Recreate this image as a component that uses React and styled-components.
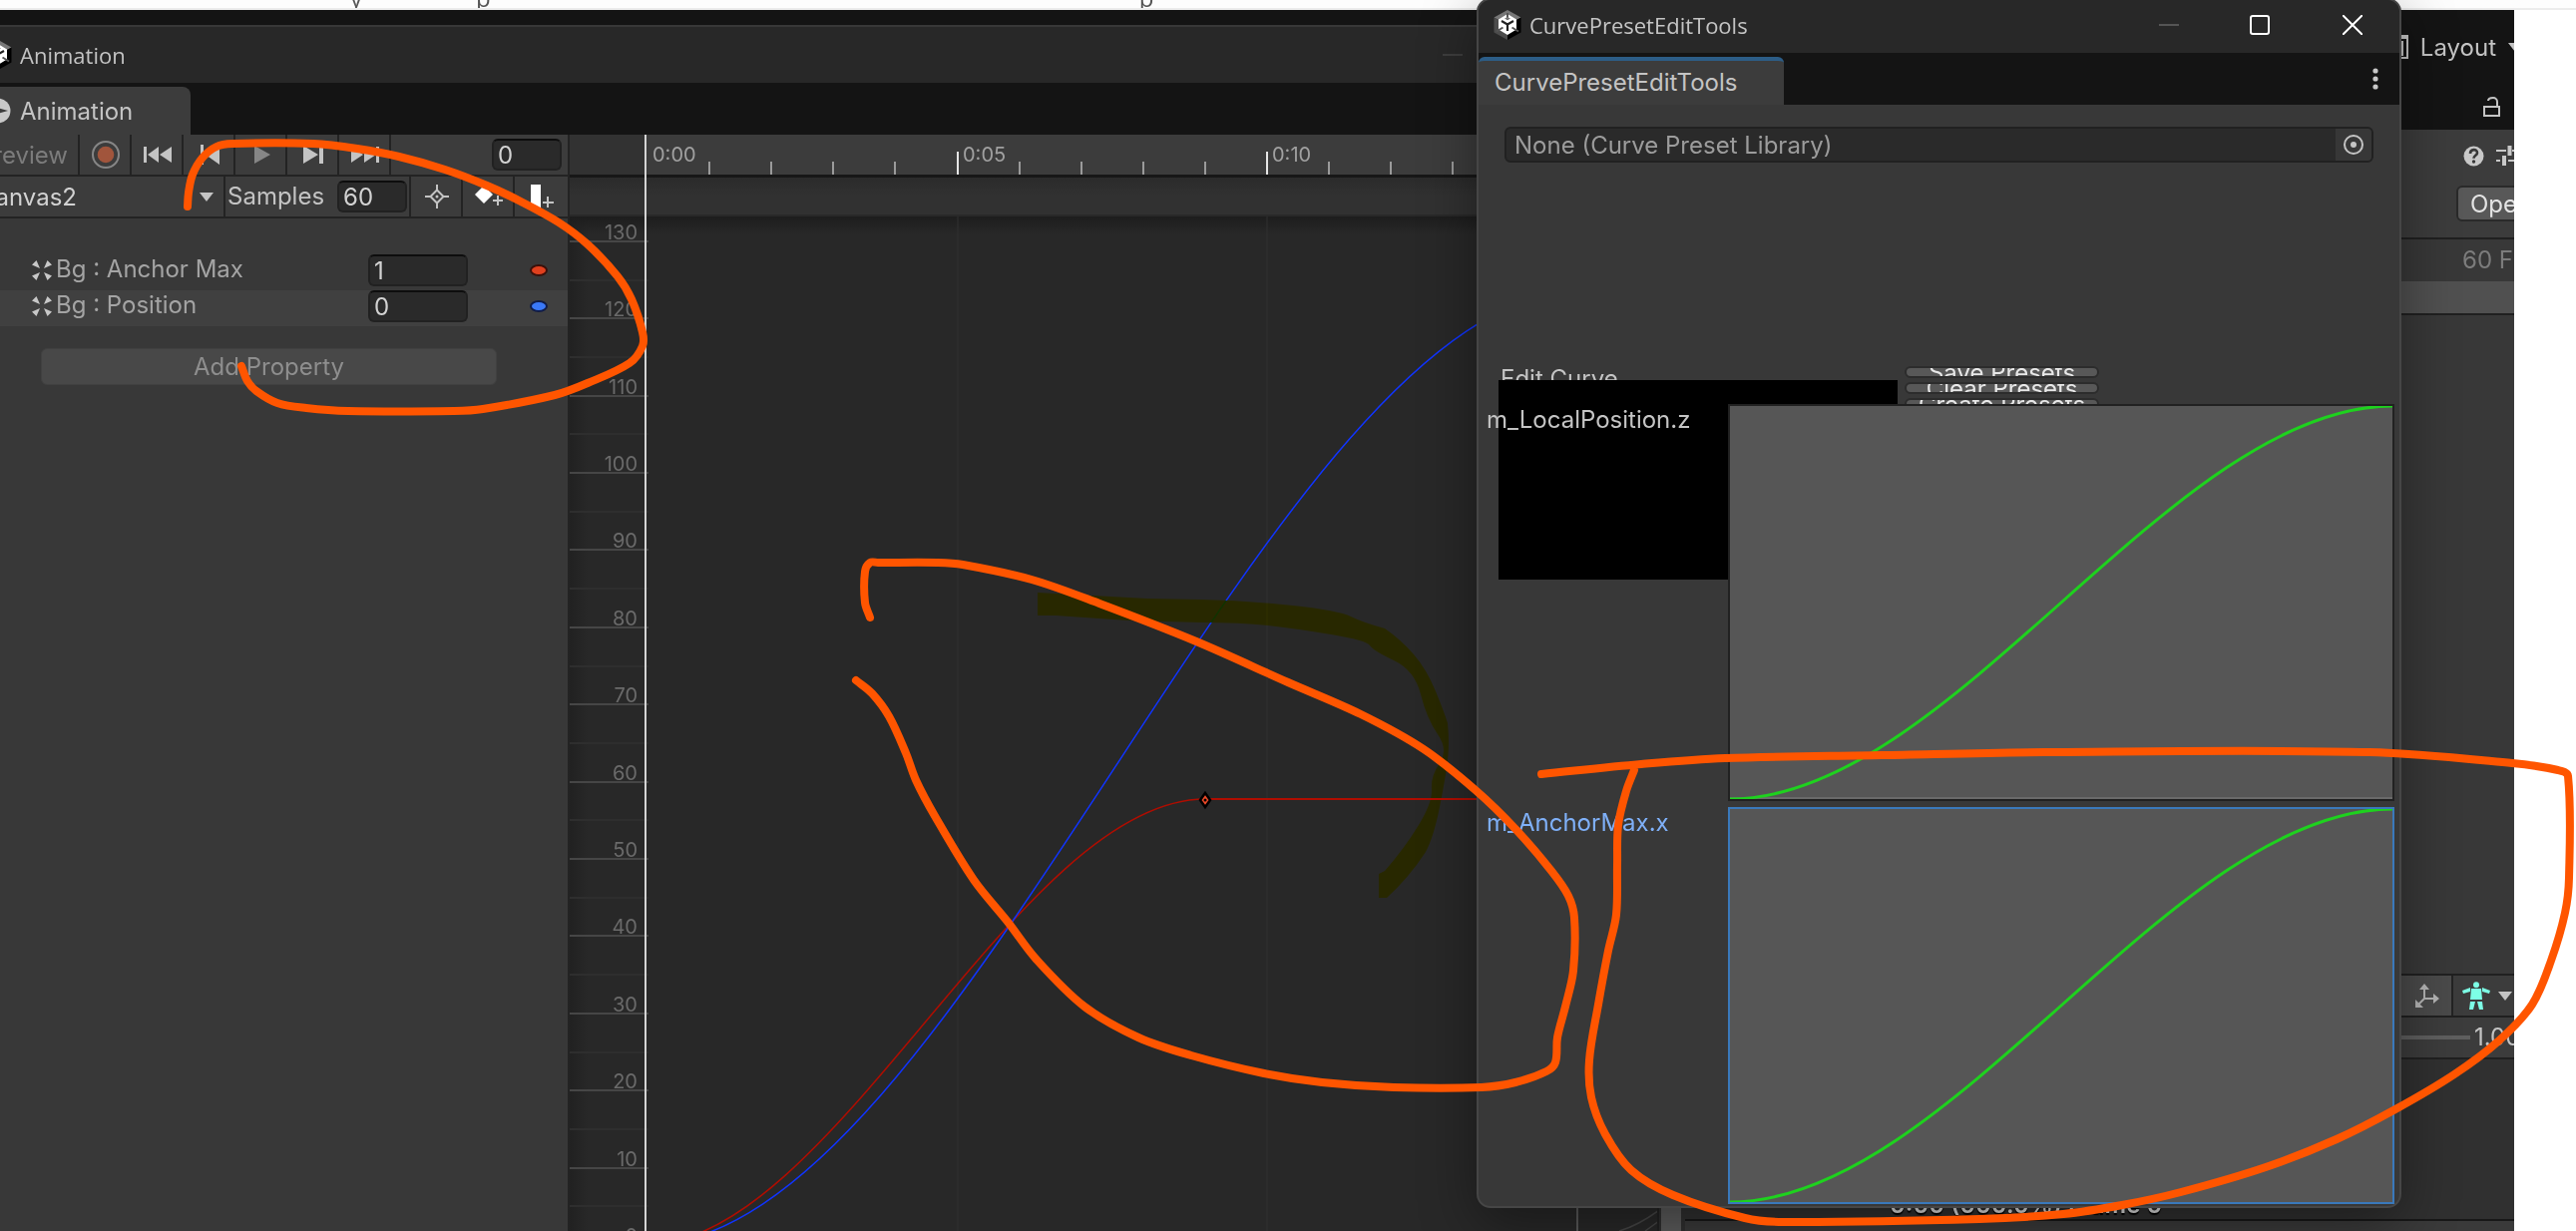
import React from "react";
import styled, { createGlobalStyle, css } from "styled-components";

const Global = createGlobalStyle`
  *, *::before, *::after { box-sizing: border-box; }
  html, body { margin: 0; background: #fff; }
  body, button, input, select { font-family: Inter, "Liberation Sans", sans-serif; font-size: 24px; }
  button, input, select { margin: 0; padding: 0; border: 0; background: none; color: inherit; }
  svg { display: block; flex: none; }
`;

/* ---------- page frame ---------- */

const Desktop = styled.main`
  position: relative;
  display: flex;
  flex-direction: column;
  height: 100vh;
  overflow: hidden;
  color: #c4c4c4;
  line-height: 28px;
`;

const BrowserStrip = styled.div`
  display: flex;
  align-items: flex-end;
  height: 10px;
  padding-left: 351px;
  overflow: hidden;
  background: #fdfdfd;
  border-bottom: 2px solid #ececec;
  color: #555;
  font-family: "Open Sans", sans-serif;
  line-height: 20px;
`;

const StripWord = styled.span`
  margin-right: ${(p) => p.$gap}px;
`;

const Editor = styled.div`
  display: flex;
  flex: 1;
  min-height: 0;
  margin-right: 62px;
  background: #141414;
`;

/* ---------- animation window ---------- */

const AnimationWindow = styled.section`
  display: flex;
  flex-direction: column;
  flex: 1;
  min-width: 0;
  padding-top: 15px;
`;

const AnimationTitle = styled.header`
  display: flex;
  align-items: center;
  height: 58px;
  padding-right: 39px;
  border-top: 2px solid #383838;
  background: #282828;
  font-family: "Open Sans", sans-serif;
  font-size: 22px;
  overflow: hidden;

  > svg { margin-left: -16px; }
`;

const AnimationTabs = styled.div`
  display: flex;
  align-items: flex-end;
  height: 52px;
`;

const AnimationTab = styled.button`
  display: flex;
  align-items: center;
  gap: 9px;
  width: 191px;
  height: 48px;
  overflow: hidden;
  background: #3c3c3c;
  border-radius: 0 8px 0 0;

  svg { margin-left: -16px; }
`;

const AnimationBody = styled.div`
  display: flex;
  flex: 1;
  min-height: 0;
`;

const PropertyPanel = styled.div`
  display: flex;
  flex-direction: column;
  flex: none;
  width: 571px;
  border-right: 2px solid #232323;
  background: #383838;
`;

const ToolRow = styled.div`
  display: flex;
  align-items: center;
  height: 42px;
  background: #3c3c3c;
  border-bottom: 2px solid #232323;
`;

const ToolButton = styled.button`
  display: flex;
  align-items: center;
  justify-content: ${(p) => (p.$end ? "flex-end" : "center")};
  flex: none;
  width: ${(p) => p.$width || 52}px;
  height: 40px;
  padding: 0 ${(p) => (p.$end ? 10 : 0)}px 0 2px;
  overflow: hidden;
  border-right: ${(p) => (p.$last ? 0 : 2)}px solid #232323;
  color: ${(p) => (p.$dim ? "#7c7c7c" : "#c4c4c4")};
`;

const NumberField = styled.input`
  flex: none;
  width: ${(p) => p.$width}px;
  height: 32px;
  padding-left: 4px;
  border: 2px solid #212121;
  border-top-color: #0d0d0d;
  border-radius: 6px;
  background: #2a2a2a;
  color: #d2d2d2;
`;

const Spacer = styled.div`
  flex: 1;
`;

const FrameSlot = styled.div`
  padding-right: 6px;
`;

const ClipPicker = styled.div`
  position: relative;
  flex: none;
  display: flex;
  width: 226px;
  height: 40px;
  overflow: hidden;
  border-right: 2px solid #232323;

  svg { position: absolute; right: 10px; top: 16px; pointer-events: none; }
`;

const ClipSelect = styled.select`
  appearance: none;
  flex: none;
  width: 246px;
  height: 40px;
  margin-left: -22px;
  color: #d2d2d2;
`;

const SamplesLabel = styled.label`
  flex: none;
  width: 112px;
  padding-left: 2px;
`;

const SamplesSlot = styled.div`
  display: flex;
  width: 74px;
  height: 40px;
  align-items: center;
  border-right: 2px solid #232323;
`;

const PropertyList = styled.ul`
  margin: 0;
  padding: 36px 0 22px;
  list-style: none;
`;

const PropertyRow = styled.li`
  display: flex;
  align-items: center;
  height: 36px;
  padding: 0 20px 4px 32px;
  background: ${(p) => (p.$shaded ? "#404040" : "transparent")};
  color: #a4a4a4;
`;

const PropertyName = styled.label`
  flex: 1;
  padding: 0 0 2px 4px;
`;

const CurveDot = styled.i`
  width: 18px;
  height: 12px;
  margin-left: 62px;
  border: 2px solid ${(p) => p.$edge};
  border-radius: 50%;
  background: ${(p) => p.$fill};
`;

const AddProperty = styled.button`
  width: 457px;
  height: 37px;
  margin-left: 41px;
  border: 1px solid #404040;
  border-radius: 6px;
  background: #484848;
  color: #8e8e8e;
`;

/* ---------- timeline ---------- */

const Timeline = styled.div`
  display: flex;
  flex-direction: column;
  flex: 1;
  min-width: 0;
  position: relative;
`;

const Ruler = styled.div`
  height: 43px;
  background: linear-gradient(90deg, #323232 76px, #3c3c3c 78px);
  border-bottom: 3px solid #171717;
`;

const EventBand = styled.div`
  height: 39px;
  background: linear-gradient(#2b2b2b, #313131 18px);
  border-bottom: 2px solid #292929;
`;

const PlotArea = styled.div`
  flex: 1;
  min-height: 0;
  background:
    linear-gradient(#1d1d1d, rgba(40, 40, 40, 0) 18px),
    linear-gradient(90deg, #212121, rgba(40, 40, 40, 0) 18px),
    #282828;
`;

const Drawing = styled.svg`
  width: 100%;
  height: 100%;
  overflow: hidden;
`;

const TickText = styled.text`
  font-family: Inter, sans-serif;
  font-size: 20px;
  fill: ${(p) => p.$color};
`;

const Playhead = styled.div`
  position: absolute;
  left: 75px;
  top: 0;
  bottom: 0;
  width: 2px;
  background: #d4d4d4;
`;

const ScrollTrack = styled.div`
  flex: none;
  width: 28px;
  padding: 0 4px 0 2px;
  border-left: 2px solid #222;
  background: #303030;
`;

const ScrollThumb = styled.div`
  height: 100%;
  background: #5c5c5c;
`;

/* ---------- inspector ---------- */

const Inspector = styled.aside`
  display: flex;
  flex-direction: column;
  flex: none;
  width: 831px;
  overflow: hidden;
  background: #383838;
`;

const InspectorRow = styled.div`
  display: flex;
  align-items: center;
  justify-content: flex-end;
  flex: none;
  gap: ${(p) => p.$gap || 12}px;
  height: ${(p) => p.$height}px;
  background: ${(p) => p.$bg || "#3c3c3c"};
  ${(p) => p.$line && css`border-bottom: 2px solid #202020;`}
`;

const BarButton = styled.button`
  display: flex;
  align-items: center;
  gap: 12px;
  margin-right: ${(p) => p.$out || 0}px;
  color: #c4c4c4;
`;

const OpenButton = styled.button`
  flex: none;
  width: 90px;
  height: 36px;
  margin: 0 -32px 12px 0;
  padding-left: 12px;
  border: 2px solid #2a2a2a;
  border-radius: 6px;
  background: #585858;
  color: #e4e4e4;
  text-align: left;
`;

const FpsText = styled.span`
  width: 52px;
  color: #7c7c7c;
  white-space: nowrap;
`;

const AxisButton = styled.button`
  display: flex;
  align-items: center;
  width: 54px;
  height: 40px;
  padding-left: 16px;
  background: #4a4a4a;
  border-right: 2px solid #232323;
`;

const AvatarButton = styled.button`
  display: flex;
  align-items: center;
  gap: 8px;
  width: 60px;
  padding-left: 8px;
`;

const SpeedSlider = styled.input`
  appearance: none;
  flex: 1;
  height: 4px;
  background: #5e5e5e;
  &::-webkit-slider-thumb { appearance: none; width: 20px; height: 20px; border-radius: 50%; background: #999; }
`;

const SpeedText = styled.label`
  width: 40px;
  white-space: nowrap;
`;

const PreviewArea = styled.div`
  display: flex;
  align-items: flex-end;
  flex: none;
  height: 162px;
  padding-left: 205px;
  background: #303030;
  border-bottom: 2px solid #181818;
  color: #ddd;
  font-weight: 600;
  text-shadow: 0 2px 1px #000;
`;

const InspectorFoot = styled.div`
  height: 10px;
  background: #3a3a3a;
`;

/* ---------- floating preset window ---------- */

const PresetWindow = styled.section`
  position: absolute;
  left: 1480px;
  top: -2px;
  bottom: 23px;
  width: 927px;
  display: flex;
  flex-direction: column;
  overflow: hidden;
  border: 2px solid #464646;
  border-radius: 14px;
  background: #383838;
  box-shadow: 0 16px 56px rgba(0, 0, 0, 0.4);
`;

const PresetTitle = styled.header`
  display: flex;
  align-items: center;
  flex: none;
  height: 53px;
  padding: 0 37px 4px 15px;
  background: #282828;
  font-family: "Open Sans", sans-serif;
  font-size: 22px;
`;

const TitleText = styled.span`
  flex: 1;
  padding-left: 8px;
`;

const WindowButton = styled.button`
  margin-left: ${(p) => p.$gap || 0}px;
`;

const PresetTabs = styled.div`
  display: flex;
  align-items: flex-end;
  justify-content: space-between;
  flex: none;
  height: 52px;
  padding-right: 21px;
  background: #141414;
`;

const PresetTab = styled.button`
  width: 306px;
  height: 48px;
  padding: 0 0 2px 16px;
  border-top: 4px solid #2c5d87;
  border-radius: 6px 6px 0 0;
  background: #3c3c3c;
  text-align: left;
`;

const MenuButton = styled.button`
  height: 52px;
`;

const PresetBody = styled.div`
  position: relative;
  flex: 1;
  padding: 22px 26px 0;
`;

const ObjectField = styled.div`
  display: flex;
  height: 36px;
  border: 2px solid #212121;
  border-radius: 6px;
  background: #2a2a2a;
  color: #9c9c9c;
  overflow: hidden;
`;

const ObjectName = styled.span`
  flex: 1;
  padding-left: 8px;
  line-height: 34px;
`;

const PickButton = styled.button`
  display: flex;
  align-items: center;
  justify-content: center;
  width: 36px;
  background: #373737;
`;

const EditSection = styled.div`
  display: flex;
  gap: 7px;
  margin: 204px -6px 0;
`;

const EditLabel = styled.div`
  height: 14px;
  padding-left: 2px;
  overflow: hidden;
  line-height: 26px;
`;

const EditPreview = styled.div`
  width: 400px;
  height: 200px;
  background: #000;
`;

const PresetButtons = styled.div`
  display: flex;
  flex-direction: column;
  gap: 4px;
`;

const PresetButton = styled.button`
  display: flex;
  align-items: center;
  justify-content: center;
  width: 195px;
  height: 12px;
  overflow: hidden;
  border: 2px solid #2c2c2c;
  border-radius: 6px;
  background: #585858;
  color: #e8e8e8;
`;

const CurveRows = styled.div`
  position: absolute;
  left: 0;
  right: 5px;
  top: 300px;
  bottom: 2px;
  display: flex;
  flex-direction: column;
  gap: 6px;
`;

const CurveRow = styled.div`
  display: flex;
  flex: 1;
  min-height: 0;
`;

const CurveName = styled.span`
  flex: none;
  width: 250px;
  padding: 2px 0 0 8px;
  color: ${(p) => (p.$active ? "#7fb0f8" : "#c4c4c4")};
`;

const CurveField = styled.button`
  flex: 1;
  min-width: 0;
  overflow: hidden;
  border: 2px solid ${(p) => (p.$active ? "#3a79bb" : "#212121")};
  background: ${(p) => (p.$active ? "#565656" : "linear-gradient(0deg, #6a6a6a 2px, #565656 2px)")};
`;

/* ---------- pen marks ---------- */

const Marks = styled.svg`
  position: absolute;
  inset: 0;
  width: 100%;
  height: 100%;
  pointer-events: none;
  mix-blend-mode: ${(p) => (p.$marker ? "multiply" : "normal")};
`;

/* ---------- icons ---------- */

const UnityLogo = () => (
  <svg width="28" height="30" viewBox="0 0 28 30" aria-hidden="true">
    <path d="M14 0 27.500 7.500 14 15 .5 7.500z" fill="#777" />
    <path d="M.5 7.500 14 15v15L.5 22.500z" fill="#4c4c4c" />
    <path d="M27.500 7.500 14 15v15l13.500-7.500z" fill="#000" />
    <path d="M14 4 23 9.500v10L14 25 5 19.500v-10z" fill="#fff" />
    <path d="M14 14.500V21M14 14.500 8 11M14 14.500 20 11" stroke="#222" strokeWidth="2.200" />
    <path d="M14 3v7M3 21.500l6.500-4M25 21.500l-6.500-4" stroke="#555" strokeWidth="2" />
    <path d="M11 8.500 14 7l3 1.500-3 1.700z" fill="#777" />
  </svg>
);

const ClockIcon = () => (
  <svg width="27" height="26" viewBox="0 0 27 26" aria-hidden="true">
    <circle cx="14" cy="13" r="12.500" fill="#c8c8c8" />
    <path d="M14 3v10" fill="none" stroke="#3c3c3c" strokeWidth="3" />
    <path d="M13 10l11 3-11 3z" fill="#3c3c3c" />
  </svg>
);

const Glyph = ({ d, fill = "#c4c4c4", w = 30, h = 20 }) => (
  <svg width={w} height={h} viewBox={`0 0 ${w} ${h}`} aria-hidden="true">
    <path d={d} fill={fill} />
  </svg>
);

const Caret = () => <Glyph w={14} h={9} d="M0 0h14L7 9z" />;

const RecordIcon = () => (
  <svg width="30" height="30" viewBox="0 0 30 30" aria-hidden="true">
    <circle cx="15" cy="15" r="13" fill="none" stroke="#868686" strokeWidth="2" />
    <circle cx="15" cy="15" r="8.300" fill="#a1553c" />
  </svg>
);

const TargetIcon = () => (
  <svg width="24" height="24" viewBox="0 0 24 24" fill="none" stroke="#c4c4c4" strokeWidth="2" aria-hidden="true">
    <path d="M12 5.500 18.500 12 12 18.500 5.500 12zM12 0v6M12 18v6M0 12h6M18 12h6" />
    <circle cx="12" cy="12" r="1.500" fill="#c4c4c4" stroke="none" />
  </svg>
);

const AddKeyIcon = () => (
  <svg width="30" height="26" viewBox="0 0 30 26" aria-hidden="true">
    <path d="M10 2l9 9-9 9-9-9z" fill="#fff" />
    <path d="M24 12v10M19 17h10" stroke="#c4c4c4" strokeWidth="2" />
  </svg>
);

const AddEventIcon = () => (
  <svg width="26" height="26" viewBox="0 0 26 26" aria-hidden="true">
    <path d="M2 1h10v23H2z" fill="#fff" />
    <path d="M19 13v11M14 19h11" stroke="#c4c4c4" strokeWidth="2" />
  </svg>
);

const RectIcon = () => (
  <svg width="20" height="20" viewBox="0 0 20 20" fill="#c8c8c8" aria-hidden="true">
    <path d="M0 4.500 4.500 0 8 8zM20 4.500 15.500 0 12 8zM0 15.500 4.500 20 8 12zM20 15.500 15.500 20 12 12z" />
  </svg>
);

const LayoutIcon = () => (
  <svg width="22" height="24" viewBox="0 0 22 24" aria-hidden="true">
    <path d="M1 1h20v22H1z" fill="none" stroke="#c4c4c4" strokeWidth="2" />
    <path d="M0 0h22v4H0zM4 6h13v15H4z" fill="#c4c4c4" />
  </svg>
);

const LockIcon = () => (
  <svg width="18" height="20" viewBox="0 0 18 20" fill="none" stroke="#c4c4c4" strokeWidth="2" aria-hidden="true">
    <path d="M1 10h15v9H1zM14 10V5a4 4 0 0 0-4-4C7 1 5 2 5 4" />
  </svg>
);

const HelpIcon = () => (
  <svg width="21" height="21" viewBox="0 0 21 21" aria-hidden="true">
    <circle cx="10.500" cy="10.500" r="10" fill="#c8c8c8" />
    <path d="M7 8c0-5 7-5 7-.8 0 2.800-3.500 2.500-3.500 5.600" fill="none" stroke="#383838" strokeWidth="2.600" />
    <circle cx="10.500" cy="16" r="1.700" fill="#383838" />
  </svg>
);

const SlidersIcon = () => (
  <svg width="26" height="20" viewBox="0 0 26 20" stroke="#c8c8c8" fill="none" aria-hidden="true">
    <path d="M0 5h10M16 5h10M0 15h4M12 15h14" strokeWidth="2" />
    <path d="M13.500 0v10M8 10v10" strokeWidth="4" />
  </svg>
);

const AxisIcon = () => (
  <svg width="24" height="24" viewBox="0 0 24 24" aria-hidden="true">
    <path d="M9 4v11h10M9 15l-6 6" fill="none" stroke="#b4b4b4" strokeWidth="2" />
    <path d="M9 0l5 6H4zM24 15l-6-5v10zM0 24v-8l8 8z" fill="#b4b4b4" />
  </svg>
);

const AvatarIcon = () => (
  <svg width="28" height="28" viewBox="0 0 28 28" fill="#7dffe6" aria-hidden="true">
    <circle cx="14" cy="3.200" r="3" />
    <path d="M9 7h10l1 11H8zM0 9l8-3v4l-7 2zM28 9l-8-3v4l7 2zM8 20h5l-2 8H7zM20 20h-5l2 8h4z" />
  </svg>
);

const PickIcon = () => (
  <svg width="20" height="20" viewBox="0 0 20 20" aria-hidden="true">
    <circle cx="10" cy="10" r="9" fill="none" stroke="#c4c4c4" strokeWidth="2" />
    <circle cx="10" cy="10" r="3" fill="#c4c4c4" />
  </svg>
);

const DotsIcon = () => (
  <svg width="6" height="22" viewBox="0 0 6 22" fill="#c8c8c8" aria-hidden="true">
    <circle cx="3" cy="3" r="2.600" />
    <circle cx="3" cy="11" r="2.600" />
    <circle cx="3" cy="19" r="2.600" />
  </svg>
);

const WindowIcon = ({ kind, dim }) => (
  <svg width="20" height="20" viewBox="0 0 20 20" fill="none" stroke={dim ? "#3e3e3e" : "#fff"} strokeWidth="2" aria-hidden="true">
    {kind === "min" && <path d="M0 10h20" stroke={dim ? "#3e3e3e" : "#555"} />}
    {kind === "max" && <rect x="1" y="1" width="18" height="18" rx="2" />}
    {kind === "close" && <path d="M0 0l20 20M20 0 0 20" />}
  </svg>
);

/* ---------- data ---------- */

const playback = [
  { name: "First key", d: "M1 2h3v16H1zM16 2v16L5 10zM29 2v16L17 10z" },
  { name: "Previous key", d: "M6 0h3v20H6zM25 0v20L11 10z" },
  { name: "Play", d: "M8 1l16 9-16 9z", fill: "#868686" },
  { name: "Next key", d: "M5 1l15 9-15 9zM21 1h4v18h-4z" },
  { name: "Last key", d: "M1 2l12 8-12 8zM14 2l12 8-12 8zM26 2h3v16h-3z" },
];

const properties = [
  { name: "Bg : Anchor Max", value: "1", fill: "#e0401e", edge: "#3a100a" },
  { name: "Bg : Position", value: "0", fill: "#3a78f8", edge: "#101c48" },
];

const frames = Array.from({ length: 17 }, (_, i) => i);
const values = Array.from({ length: 14 }, (_, i) => i * 10);
const frameX = (f) => Math.round(78 + f * 62.1);
const valueY = (v) => Math.round(1031 - v * 7.74);

/* Catmull-Rom spline through the points of a pen stroke. */
const spline = (pts) => {
  const at = (i) => pts[Math.max(0, Math.min(pts.length - 1, i))];
  let d = `M${pts[0]}`;
  for (let i = 0; i < pts.length - 1; i++) {
    const [a, b, c, e] = [at(i - 1), at(i), at(i + 1), at(i + 2)];
    const len = Math.hypot(c[0] - b[0], c[1] - b[1]);
    const ctrl = (p, q, from, sign) => {
      const tx = q[0] - p[0];
      const ty = q[1] - p[1];
      const k = (sign * len) / 3 / (Math.hypot(tx, ty) || 1);
      return [from[0] + tx * k, from[1] + ty * k];
    };
    d += `C${ctrl(a, c, b, 1)} ${ctrl(b, e, c, -1)} ${c}`;
  }
  return d;
};

const strokes = [
  [[188, 207], [189, 193], [193, 175], [203, 158], [217, 147], [233, 144], [314, 144], [358, 149], [400, 157], [446, 170], [488, 186], [522, 202], [560, 223], [589, 245], [619, 277], [633, 300], [644, 333], [644, 347], [631, 364], [589, 384], [556, 396], [484, 410], [455, 412], [349, 412], [307, 409], [278, 404], [257, 392], [248, 382], [242, 367]],
  [[872, 619], [867, 604], [867, 573], [872, 564], [880, 564], [940, 564], [965, 566], [1034, 581], [1102, 605], [1199, 643], [1291, 684], [1364, 716], [1427, 751], [1480, 793], [1519, 831], [1555, 873], [1572, 898], [1578, 920], [1577, 973], [1569, 1009], [1561, 1040], [1559, 1065], [1550, 1074], [1519, 1085], [1485, 1090], [1397, 1090], [1325, 1085], [1267, 1076], [1194, 1058], [1141, 1040], [1087, 1009], [1039, 962], [1010, 924], [976, 882], [937, 818], [918, 782], [908, 755], [891, 718], [874, 695], [858, 682]],
  [[1545, 776], [1645, 766], [1729, 760], [1886, 757], [2049, 754], [2375, 754], [2518, 765], [2564, 772], [2574, 778], [2575, 880], [2571, 915], [2557, 963], [2538, 1007], [2505, 1043], [2460, 1077], [2401, 1112], [2342, 1142], [2271, 1170], [2186, 1195], [2127, 1208], [2068, 1217], [1984, 1222], [1788, 1225], [1749, 1221], [1677, 1198], [1635, 1173], [1609, 1137], [1595, 1100], [1593, 1063], [1602, 1007], [1612, 953], [1620, 917], [1621, 867], [1622, 827], [1630, 793], [1638, 772]],
];

/* ---------- parts ---------- */

function PropertySide() {
  return (
    <PropertyPanel>
      <ToolRow>
        <ToolButton $width={80} $end $dim>Preview</ToolButton>
        <ToolButton aria-label="Record"><RecordIcon /></ToolButton>
        {playback.map((b) => (
          <ToolButton key={b.name} aria-label={b.name}>
            <Glyph d={b.d} fill={b.fill} />
          </ToolButton>
        ))}
        <Spacer />
        <FrameSlot>
          <NumberField $width={70} aria-label="Frame" defaultValue="0" />
        </FrameSlot>
      </ToolRow>
      <ToolRow>
        <ClipPicker>
          <ClipSelect aria-label="Clip"><option>Canvas2</option></ClipSelect>
          <Caret />
        </ClipPicker>
        <SamplesLabel htmlFor="samples">Samples</SamplesLabel>
        <SamplesSlot>
          <NumberField $width={70} id="samples" defaultValue="60" />
        </SamplesSlot>
        <ToolButton aria-label="Filter by selection"><TargetIcon /></ToolButton>
        <ToolButton aria-label="Add keyframe"><AddKeyIcon /></ToolButton>
        <ToolButton $last aria-label="Add event"><AddEventIcon /></ToolButton>
      </ToolRow>
      <PropertyList>
        {properties.map((p, i) => (
          <PropertyRow key={p.name} $shaded={i === 1}>
            <RectIcon />
            <PropertyName htmlFor={`prop-${i}`}>{p.name}</PropertyName>
            <NumberField $width={100} id={`prop-${i}`} defaultValue={p.value} />
            <CurveDot $fill={p.fill} $edge={p.edge} />
          </PropertyRow>
        ))}
      </PropertyList>
      <AddProperty>Add Property</AddProperty>
    </PropertyPanel>
  );
}

function TimelineSide() {
  return (
    <Timeline>
      <Ruler>
        <Drawing>
          {frames.slice(1).map((f) => (
            <path
              key={f}
              d={`M${frameX(f)} ${f % 5 ? 27 : 17}V40`}
              stroke={f % 5 ? "#9a9a9a" : "#e6e6e6"}
              strokeWidth="2"
            />
          ))}
          {["0:00", "0:05", "0:10"].map((t, i) => (
            <TickText key={t} x={frameX(i * 5) + 5} y="27" $color="#a0a0a0">{t}</TickText>
          ))}
        </Drawing>
      </Ruler>
      <EventBand />
      <PlotArea>
        <Drawing>
          <path d="M389 0V1100M699 0V1100" stroke="#303030" strokeWidth="1" />
          {values.map((v) => (
            <g key={v}>
              <path d={`M0 ${valueY(v)}H79`} stroke="#464646" strokeWidth="2" />
              <path d={`M0 ${valueY(v + 5)}H79`} stroke="#2e2e2e" strokeWidth="2" />
              <TickText x="68" y={valueY(v) - 2} textAnchor="end" $color="#6a6a6a">{v}</TickText>
            </g>
          ))}
          <path d="M76 1031C263 1031 450 584 637 584" fill="none" stroke="#b00d00" strokeWidth="1.500" />
          <path d="M637 584H920" stroke="#b00d00" strokeWidth="2" />
          <path d="M76 1031C390 1031 703 74 1016 74" fill="none" stroke="#1034ff" strokeWidth="1.500" />
          <path d="M637 578l5 7-5 7-5-7z" fill="#f04a28" stroke="#000" strokeWidth="2.500" />
          <circle cx="637" cy="585" r="1.500" fill="#000" />
          <path d="M1010 0V1100" stroke="#5a5a5a" strokeWidth="2" />
          <path d="M1052 1017Q1072 1011 1092 996M1078 1017L1092 1007" fill="none" stroke="#464646" strokeWidth="1.500" />
        </Drawing>
      </PlotArea>
      <Playhead />
    </Timeline>
  );
}

function InspectorSide() {
  return (
    <Inspector>
      <InspectorRow $height={74} $bg="#141414">
        <BarButton $out={-8}><LayoutIcon />Layout <Caret /></BarButton>
      </InspectorRow>
      <InspectorRow $height={46} $bg="#141414">
        <BarButton $out={13} aria-label="Lock"><LockIcon /></BarButton>
      </InspectorRow>
      <InspectorRow $height={52}>
        <BarButton aria-label="Help"><HelpIcon /></BarButton>
        <BarButton $out={-8} aria-label="Presets"><SlidersIcon /></BarButton>
      </InspectorRow>
      <InspectorRow $height={58} $line>
        <OpenButton>Open</OpenButton>
      </InspectorRow>
      <InspectorRow $height={42} $bg="#383838">
        <FpsText>60 FPS</FpsText>
      </InspectorRow>
      <InspectorRow $height={34} $bg="#505050" $line />
      <Spacer />
      <InspectorRow $height={2} $line />
      <InspectorRow $height={42} $gap={1} $line>
        <AxisButton aria-label="Axes"><AxisIcon /></AxisButton>
        <AvatarButton aria-label="Avatar"><AvatarIcon /><Caret /></AvatarButton>
      </InspectorRow>
      <InspectorRow $height={42} $gap={4} $line>
        <SpeedSlider id="speed" type="range" defaultValue="50" />
        <SpeedText htmlFor="speed">1.00x</SpeedText>
      </InspectorRow>
      <PreviewArea>0:00 (000.0%) Frame 0</PreviewArea>
      <InspectorFoot />
    </Inspector>
  );
}

function WindowControls({ dim }) {
  return (
    <>
      <WindowButton aria-label="Minimize"><WindowIcon kind="min" dim={dim} /></WindowButton>
      <WindowButton $gap={71} aria-label="Maximize"><WindowIcon kind="max" dim={dim} /></WindowButton>
      <WindowButton $gap={73} aria-label="Close"><WindowIcon kind="close" dim={dim} /></WindowButton>
    </>
  );
}

function PresetTools() {
  return (
    <PresetWindow>
      <PresetTitle>
        <UnityLogo />
        <TitleText>CurvePresetEditTools</TitleText>
        <WindowControls />
      </PresetTitle>
      <PresetTabs>
        <PresetTab>CurvePresetEditTools</PresetTab>
        <MenuButton aria-label="Window menu"><DotsIcon /></MenuButton>
      </PresetTabs>
      <PresetBody>
        <ObjectField>
          <ObjectName>None (Curve Preset Library)</ObjectName>
          <PickButton aria-label="Pick library"><PickIcon /></PickButton>
        </ObjectField>
        <EditSection>
          <div>
            <EditLabel>Edit Curve</EditLabel>
            <EditPreview />
          </div>
          <PresetButtons>
            <PresetButton>Save Presets</PresetButton>
            <PresetButton>Clear Presets</PresetButton>
            <PresetButton>Create Presets</PresetButton>
          </PresetButtons>
        </EditSection>
        <CurveRows>
          {["m_LocalPosition.z", "m_AnchorMax.x"].map((name, i) => (
            <CurveRow key={name}>
              <CurveName $active={i === 1}>{name}</CurveName>
              <CurveField $active={i === 1} aria-label={`Edit ${name}`}>
                <Drawing viewBox="0 0 100 100" preserveAspectRatio="none">
                  <path
                    d="M0 100C33.300 100 66.700 0 100 0"
                    fill="none"
                    stroke="#1ed21e"
                    strokeWidth="3"
                    vectorEffect="non-scaling-stroke"
                  />
                </Drawing>
              </CurveField>
            </CurveRow>
          ))}
        </CurveRows>
      </PresetBody>
    </PresetWindow>
  );
}

export default function App() {
  return (
    <>
      <Global />
      <Desktop>
        <BrowserStrip aria-hidden="true">
          <StripWord $gap={114}>y</StripWord>
          <StripWord $gap={650}>p</StripWord>
          <StripWord $gap={0}>p</StripWord>
        </BrowserStrip>
        <Editor>
          <AnimationWindow>
            <AnimationTitle>
              <UnityLogo />
              <TitleText>Animation</TitleText>
              <WindowControls dim />
            </AnimationTitle>
            <AnimationTabs>
              <AnimationTab><ClockIcon />Animation</AnimationTab>
            </AnimationTabs>
            <AnimationBody>
              <PropertySide />
              <TimelineSide />
              <ScrollTrack><ScrollThumb /></ScrollTrack>
            </AnimationBody>
          </AnimationWindow>
          <InspectorSide />
        </Editor>
        <Marks $marker aria-hidden="true">
          <path
            fill="#ff0"
            d="M1040 594L1150 600 1204 601Q1250 602 1296 607T1354 618 1388 630Q1404 641 1417 656T1439 693 1451 725Q1453 745 1451 762T1443 809 1429 854Q1412 880 1390 900H1382V876L1388 873Q1408 850 1422 827T1435 791 1443 765 1441 736 1424 696 1397 662 1373 647 1334 636 1271 627 1204 624L1131 622 1058 617H1040z"
          />
        </Marks>
        <PresetTools />
        <Marks aria-hidden="true">
          {strokes.map((s, i) => (
            <path key={i} d={spline(s)} fill="none" stroke="#ff5500" strokeWidth="8" strokeLinecap="round" strokeLinejoin="round" />
          ))}
        </Marks>
      </Desktop>
    </>
  );
}
